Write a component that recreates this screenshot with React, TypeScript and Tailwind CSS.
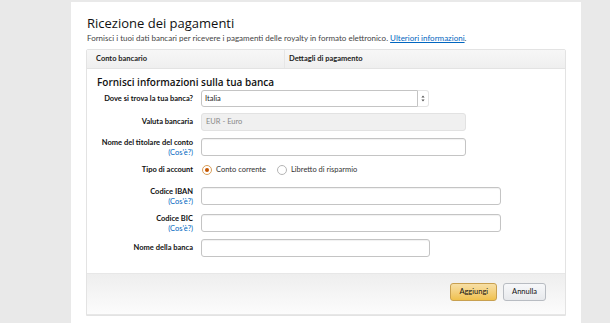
const Row = ({
	label,
	help,
	children,
	className,
}: {
	label: string;
	help?: boolean;
	children: React.ReactNode;
	className?: string;
}) => {
	return (
		<div className={`flex ${help ? "items-start" : "items-center"} ${className ?? ""}`}>
			<div className="w-[106px] shrink-0 text-right">
				<div className="text-[7.5px] leading-[10px] font-bold text-[#111]">{label}</div>
				{help && <div className="text-[7.5px] leading-[10px] text-[#0066c0]">(Cos'è?)</div>}
			</div>
			<div className="ml-[8px] flex-1">{children}</div>
		</div>
	);
};

const Input = ({ w, value, disabled }: { w: string; value?: string; disabled?: boolean }) => (
	<div
		className={`${w} h-[18px] rounded-[3px] border ${
			disabled ? "border-[#e2e2e2] bg-[#f0f0f0] text-[#888]" : "border-[#c4c4c4] bg-white shadow-[inset_0_1px_1px_rgba(0,0,0,0.06)]"
		} flex items-center px-[4px] text-[7.5px]`}
	>
		{value}
	</div>
);

const Radio = ({ checked, label }: { checked?: boolean; label: string }) => (
	<div className="flex items-center gap-[4px]">
		<span
			className={`w-[10px] h-[10px] rounded-full border flex items-center justify-center ${
				checked ? "border-[#d9a05b] bg-white" : "border-[#b5b5b5] bg-white"
			}`}
		>
			{checked && <span className="w-[4px] h-[4px] rounded-full bg-[#c45500]" />}
		</span>
		<span className="text-[7.5px] text-[#333]">{label}</span>
	</div>
);

export default function App() {
	return (
		<div className="w-[610px] h-[323px] overflow-hidden bg-[#e9e9e9] font-['Lato',sans-serif]">
			<div className="ml-[71px] mt-[2px] w-[510px] h-[330px] bg-white px-[15px] pt-[13px]">
				<h1 className="ml-[1px] text-[13px] leading-[17px] font-medium text-[#111] font-['Open_Sans',sans-serif]">
					Ricezione dei pagamenti
				</h1>
				<p className="ml-[1px] mt-[1px] text-[8px] leading-[10px] text-[#444]">
					Fornisci i tuoi dati bancari per ricevere i pagamenti delle royalty in formato elettronico.{" "}
					<span className="text-[#0066c0] underline">Ulteriori informazioni</span>.
				</p>
				<div className="mt-[6px] border border-[#e3e3e3] rounded-t-[2px]">
					<div className="flex h-[19px] bg-gradient-to-b from-[#f7f7f7] to-[#efefef] border-b border-[#e3e3e3] text-[7.5px] font-bold text-[#222]">
						<div className="w-[197px] flex items-center pl-[9px]">Conto bancario</div>
						<div className="flex-1 flex items-center pl-[4px] border-l border-[#e6e6e6]">
							Dettagli di pagamento
						</div>
					</div>
					<div className="pt-[6px]">
						<h2 className="ml-[10px] text-[10px] leading-[14px] font-semibold text-[#111] font-['Open_Sans',sans-serif]">
							Fornisci informazioni sulla tua banca
						</h2>
						<div className="mt-[1px]">
							<Row label="Dove si trova la tua banca?">
								<div className="flex w-[228px] h-[17px]">
									<div className="flex-1 rounded-l-[3px] border border-[#c4c4c4] flex items-center px-[3px] text-[7.5px] text-[#222]">
										Italia
									</div>
									<div className="w-[11px] border border-l-0 border-[#e4e4e4] rounded-r-[3px] flex items-center justify-center">
										<svg width="4" height="7" viewBox="0 0 4 7">
											<path d="M2 0.5 L3.6 2.6 H0.4 Z M2 6.5 L3.6 4.4 H0.4 Z" fill="#555" />
										</svg>
									</div>
								</div>
							</Row>
							<Row label="Valuta bancaria" className="mt-[6px]">
								<Input w="w-[265px]" value="EUR - Euro" disabled />
							</Row>
							<Row label="Nome del titolare del conto" help className="mt-[7px]">
								<Input w="w-[265px]" />
							</Row>
							<Row label="Tipo di account" className="mt-[5px] h-[14px]">
								<div className="flex items-center gap-[11px] pl-[1px]">
									<Radio checked label="Conto corrente" />
									<Radio label="Libretto di risparmio" />
								</div>
							</Row>
							<Row label="Codice IBAN" help className="mt-[10px]">
								<Input w="w-[300px]" />
							</Row>
							<Row label="Codice BIC" help className="mt-[7px]">
								<Input w="w-[300px]" />
							</Row>
							<Row label="Nome della banca" className="mt-[5px]">
								<Input w="w-[229px]" />
							</Row>
						</div>
						<div className="mt-[16px] h-[42px] border-t border-b border-[#e7e7e7] bg-gradient-to-b from-[#eeeeee] to-[#fcfcfc] flex items-start justify-end gap-[6px] pr-[19px] pt-[9px]">
							<button className="h-[18px] px-[8px] rounded-[3px] border border-[#c8a050] bg-gradient-to-b from-[#f7dfa5] to-[#f0c14b] text-[7.5px] text-[#111]">
								Aggiungi
							</button>
							<button className="h-[18px] px-[8px] rounded-[3px] border border-[#b8bcc2] bg-gradient-to-b from-[#f7f8fa] to-[#e7e9ec] text-[7.5px] text-[#111]">
								Annulla
							</button>
						</div>
					</div>
				</div>
			</div>
		</div>
	);
}
